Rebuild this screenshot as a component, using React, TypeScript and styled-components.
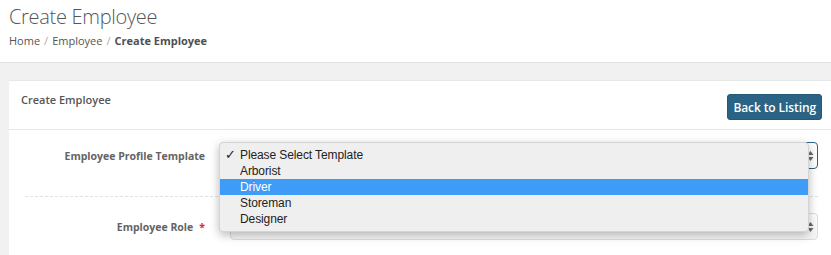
import React from 'react';
import styled, { createGlobalStyle } from 'styled-components';

const GlobalStyle = createGlobalStyle`
  html, body {
    margin: 0;
    padding: 0;
    background: #ffffff;
    font-family: 'Open Sans', 'Liberation Sans', sans-serif;
  }
`;

const PageHeader = styled.div`
  height: 63px;
  box-sizing: border-box;
  padding: 3px 9px 0;
  border-bottom: 1px solid #e3e3e3;
  background: #ffffff;
`;

const Title = styled.h1`
  margin: 0;
  font-size: 20px;
  line-height: 28px;
  font-weight: 300;
  letter-spacing: -0.3px;
  color: #555555;
`;

const Crumbs = styled.div`
  margin-top: 2px;
  display: flex;
  gap: 4px;
  font-size: 11px;
  line-height: 16px;
  color: #555555;
`;

const Crumb = styled.span<{ $current?: boolean }>`
  font-weight: ${({ $current }) => ($current ? 700 : 400)};
  color: ${({ $current }) => ($current ? '#4f4f4f' : '#555555')};
`;

const Slash = styled.span`
  color: #aaaaaa;
`;

const Content = styled.div`
  background: #f1f1f1;
  padding: 17px 0 0 9px;
  height: 192px;
  box-sizing: border-box;
  overflow: hidden;
`;

const Card = styled.div`
  background: #ffffff;
  border-top: 1px solid #e6e8ea;
  height: 100%;
`;

const CardHeader = styled.div`
  height: 49px;
  box-sizing: border-box;
  display: flex;
  justify-content: space-between;
  align-items: flex-start;
  padding: 11px 9px 0 12px;
  border-bottom: 1px solid #e6e6e6;
`;

const CardTitle = styled.div`
  font-size: 11px;
  line-height: 16px;
  font-weight: 600;
  color: #555555;
`;

const Button = styled.button`
  margin-top: 2px;
  height: 26px;
  padding: 0 5px;
  border: 1px solid #245a78;
  border-radius: 3px;
  background: #2b6384;
  color: #ffffff;
  font-family: 'Open Sans', 'Liberation Sans', sans-serif;
  font-size: 12px;
  font-weight: 600;
  letter-spacing: -0.1px;
  cursor: pointer;
`;

const FormBody = styled.div`
  padding: 0 13px 0 16px;
`;

const Row = styled.div<{ $top: number; $bottom: number; $divider?: boolean }>`
  display: grid;
  grid-template-columns: 180px 1fr;
  column-gap: 25px;
  align-items: center;
  padding: ${({ $top, $bottom }) => `${$top}px 0 ${$bottom}px`};
  border-bottom: ${({ $divider }) => ($divider ? '1px dashed #e2e2e2' : 'none')};
`;

const Label = styled.label`
  text-align: right;
  font-size: 10.5px;
  font-weight: 700;
  color: #646464;
`;

const Required = styled.span`
  color: #e0262b;
  margin-left: 6px;
`;

const SelectWrap = styled.div`
  position: relative;
`;

const SelectBox = styled.div<{ $focused?: boolean }>`
  height: 27px;
  box-sizing: border-box;
  border: 1px solid ${({ $focused }) => ($focused ? '#27638d' : '#dcdcdc')};
  border-radius: 4px;
  background: ${({ $focused }) => ($focused ? '#ffffff' : 'linear-gradient(#ffffff, #f4f4f4)')};
  display: flex;
  align-items: center;
  justify-content: space-between;
  padding: 0 3px 0 10px;
  font-family: 'Liberation Sans', 'Open Sans', sans-serif;
  font-size: 12px;
  color: #333333;
`;

const Menu = styled.ul`
  position: absolute;
  top: 0;
  left: -11px;
  width: 590px;
  margin: 0;
  padding: 4px 0;
  list-style: none;
  background: #efefef;
  border: 1px solid #d4d4d4;
  border-radius: 4px;
  box-sizing: border-box;
  box-shadow: 0 3px 10px rgba(0, 0, 0, 0.28);
  font-family: 'Liberation Sans', 'Open Sans', sans-serif;
  font-size: 12px;
  z-index: 5;
`;

const MenuItem = styled.li<{ $active?: boolean }>`
  height: 16px;
  line-height: 16px;
  padding-left: 20px;
  position: relative;
  letter-spacing: -0.1px;
  color: ${({ $active }) => ($active ? '#ffffff' : '#222222')};
  background: ${({ $active }) => ($active ? '#3f9cf6' : 'transparent')};
`;

const Check = styled.span`
  position: absolute;
  left: 5px;
  top: 0;
  font-family: 'DejaVu Sans', sans-serif;
  font-size: 13px;
  font-weight: 700;
`;

function Arrows() {
  return (
    <svg width="7" height="12" viewBox="0 0 7 12">
      <path d="M3.5 1 L6.5 5 L0.5 5 Z" fill="#6b6b6b" />
      <path d="M3.5 11 L6.5 7 L0.5 7 Z" fill="#6b6b6b" />
    </svg>
  );
}

const options = ['Please Select Template', 'Arborist', 'Driver', 'Storeman', 'Designer'];

export default function App() {
  return (
    <>
      <GlobalStyle />
      <PageHeader>
        <Title>Create Employee</Title>
        <Crumbs>
          <Crumb>Home</Crumb>
          <Slash>/</Slash>
          <Crumb>Employee</Crumb>
          <Slash>/</Slash>
          <Crumb $current>Create Employee</Crumb>
        </Crumbs>
      </PageHeader>
      <Content>
        <Card>
          <CardHeader>
            <CardTitle>Create Employee</CardTitle>
            <Button>Back to Listing</Button>
          </CardHeader>
          <FormBody>
            <Row $top={12} $bottom={27} $divider>
              <Label>Employee Profile Template</Label>
              <SelectWrap>
                <SelectBox $focused>
                  <span>Please Select Template</span>
                  <Arrows />
                </SelectBox>
                <Menu>
                  {options.map((o, i) => (
                    <MenuItem key={o} $active={o === 'Driver'}>
                      {i === 0 && <Check>✓</Check>}
                      {o}
                    </MenuItem>
                  ))}
                </Menu>
              </SelectWrap>
            </Row>
            <Row $top={16} $bottom={12}>
              <Label>
                Employee Role<Required>*</Required>
              </Label>
              <SelectWrap>
                <SelectBox>
                  <span>Please Select Role</span>
                  <Arrows />
                </SelectBox>
              </SelectWrap>
            </Row>
          </FormBody>
        </Card>
      </Content>
    </>
  );
}
